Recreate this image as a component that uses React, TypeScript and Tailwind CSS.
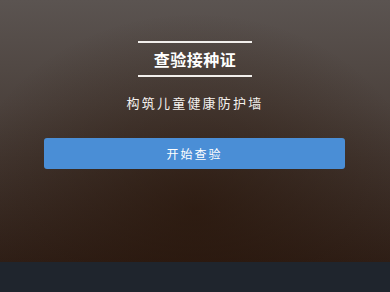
export default function App() {
  return (
    <div
      className="w-[390px] h-[292px] flex flex-col overflow-hidden"
      style={{ fontFamily: '"Noto Sans CJK SC", "Liberation Sans", sans-serif' }}
    >
      <div className="relative flex-1 flex flex-col items-center bg-[linear-gradient(180deg,#5b5451_0%,#4c423d_40%,#2f1f17_100%)]">
        <div className="absolute inset-0 bg-[radial-gradient(ellipse_60%_75%_at_50%_80%,rgba(38,18,6,0.6)_0%,rgba(38,18,6,0)_100%)]" />
        <div className="relative flex flex-col items-center pt-[41px]">
          <div className="w-[114px] h-[2px] bg-[#f2efec]" />
          <div className="mt-[4px] text-[16px] leading-[24px] font-bold text-white tracking-[0.5px]">查验接种证</div>
          <div className="mt-[4px] w-[114px] h-[2px] bg-[#f2efec]" />
          <div className="mt-[17px] text-[13px] leading-[18px] text-[#f4f1ee] tracking-[2.2px]">构筑儿童健康防护墙</div>
        </div>
        <div className="relative w-full pl-[44px] pr-[45px] mt-[26px]">
          <button
            type="button"
            className="w-full h-[31px] rounded-[3px] bg-[#4a8ed6] text-white text-[12px] tracking-[2px] flex items-center justify-center"
          >
            开始查验
          </button>
        </div>
      </div>
      <div className="h-[30px] bg-[#1f252d]" />
    </div>
  );
}
